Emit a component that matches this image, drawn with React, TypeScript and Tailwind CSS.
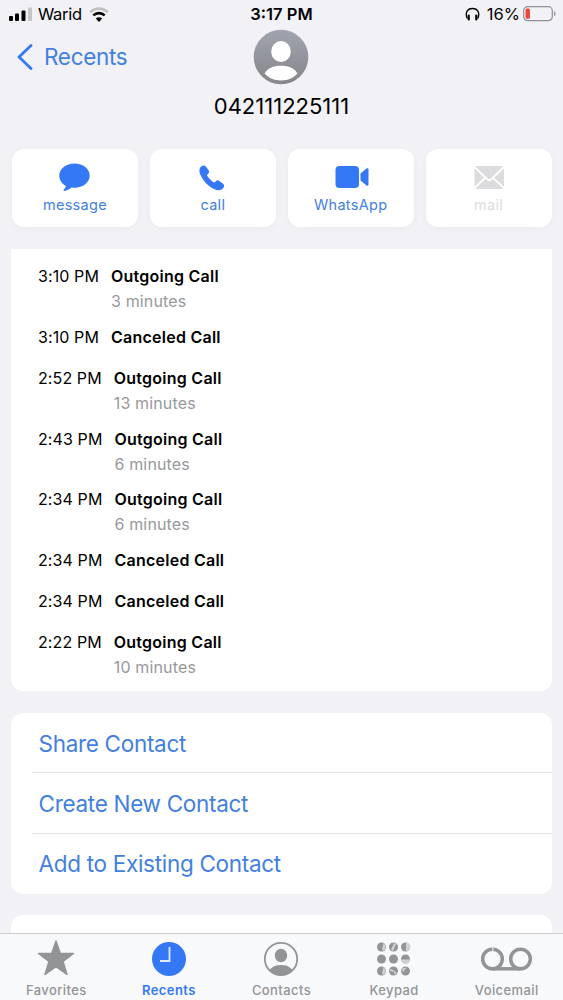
import type { ReactNode } from 'react'

interface CallEntry {
  time: string
  title: string
  duration?: string
}

const calls: CallEntry[] = [
  { time: '3:10 PM', title: 'Outgoing Call', duration: '3 minutes' },
  { time: '3:10 PM', title: 'Canceled Call' },
  { time: '2:52 PM', title: 'Outgoing Call', duration: '13 minutes' },
  { time: '2:43 PM', title: 'Outgoing Call', duration: '6 minutes' },
  { time: '2:34 PM', title: 'Outgoing Call', duration: '6 minutes' },
  { time: '2:34 PM', title: 'Canceled Call' },
  { time: '2:34 PM', title: 'Canceled Call' },
  { time: '2:22 PM', title: 'Outgoing Call', duration: '10 minutes' },
]

const links = ['Share Contact', 'Create New Contact', 'Add to Existing Contact']

function StatusBar() {
  return (
    <div className="grid h-7 grid-cols-3 items-center pb-px text-[16.5px] leading-7">
      <div className="flex items-center pl-[9px]">
        <svg width="24" height="14" viewBox="0 0 24 14">
          <rect x="0" y="9" width="4" height="5" rx="1" />
          <rect x="6" y="6.500" width="4" height="7.500" rx="1" />
          <rect x="12.500" y="3.500" width="4" height="10.500" rx="1" />
          <rect x="19" y=".5" width="4" height="13.500" rx="1" fill="#c5c5c9" />
        </svg>
        <span className="ml-[5px] tracking-[-0.3px]">Warid</span>
        <svg className="ml-[7px]" width="20" height="15" viewBox="0 0 20 15" fill="none">
          <path d="M1.300 5.200C6.300.4 13.700.4 18.700 5.200" stroke="#c0c0c4" strokeWidth="2.600" />
          <path d="M4.300 8.400c3.300-3 8.100-3 11.400 0" stroke="#000" strokeWidth="2.600" />
          <path d="M10 15 6.800 11.600c1.800-1.700 4.600-1.700 6.400 0Z" fill="#000" />
        </svg>
      </div>
      <div className="text-center font-semibold">3:17 PM</div>
      <div className="flex items-center justify-end pr-1.5">
        <svg className="mr-[7px]" width="15" height="14" viewBox="0 0 15 14" fill="none">
          <path d="M2.300 11.500C-.2 6.500 2 1.500 7.500 1.500s7.700 5 5.200 10" stroke="#000" strokeWidth="1.300" />
          <path d="M3.700 8.500v4M11.300 8.500v4" stroke="#000" strokeWidth="2.200" strokeLinecap="round" />
        </svg>
        <span>16%</span>
        <svg className="ml-[3px]" width="34" height="16" viewBox="0 0 34 16">
          <rect x=".7" y=".7" width="28.600" height="14" rx="4" fill="none" stroke="#919196" strokeWidth="1.200" />
          <rect x="2.500" y="2.600" width="4.500" height="10.200" rx="1.500" fill="#eb4b3d" />
          <path d="M31 5.200c2 .8 2 4.200 0 5Z" fill="#919196" />
        </svg>
      </div>
    </div>
  )
}

function Avatar() {
  return (
    <svg width="56" height="56" viewBox="0 0 56 56">
      <defs>
        <linearGradient id="avatar" x1="0" y1="0" x2="0" y2="1">
          <stop offset="0" stopColor="#a1a4b0" />
          <stop offset="1" stopColor="#858689" />
        </linearGradient>
      </defs>
      <circle cx="28" cy="28" r="27.300" fill="url(#avatar)" />
      <ellipse cx="28" cy="22.500" rx="9.800" ry="10.500" fill="#fff" />
      <path d="M11.500 44.500c3-5.200 8.700-7.700 16.500-7.700s13.500 2.500 16.500 7.700c-4.200 4.600-9.500 6.900-16.500 6.900s-12.300-2.300-16.500-6.900Z" fill="#fff" />
    </svg>
  )
}

function ActionButton({ label, disabled, children }: { label: string; disabled?: boolean; children: ReactNode }) {
  return (
    <button
      className={`flex h-[78px] flex-col items-center rounded-xl bg-white pt-3 shadow-[0_2px_10px_rgba(0,0,0,0.03)] ${
        disabled ? 'text-[#dcdcde]' : 'text-[#3478f6]'
      }`}
    >
      <svg width="36" height="32" viewBox="0 0 36 32" fill="currentColor">
        {children}
      </svg>
      <span className={`mt-px text-[14.5px] leading-[22px] tracking-[0.3px] ${disabled ? '' : 'text-[#437fdf]'}`}>{label}</span>
    </button>
  )
}

function Actions() {
  return (
    <div className="mt-[29px] grid grid-cols-4 gap-3 pr-[11.500px] pl-3">
      <ActionButton label="message">
        <path d="M17.500 2.500c8.500 0 15.200 5.300 15.200 12.100S26.100 26.800 17.500 26.800c-1 0-2 0-2.900-.2-2.200 1.900-5 3.100-7.300 3.300-.8.100-1.100-.7-.5-1.300 1.100-1.100 1.800-2.200 2-3.700C4.800 22.800 2.300 19 2.300 14.600 2.300 7.800 9 2.500 17.500 2.500Z" />
      </ActionButton>
      <ActionButton label="call">
        <path d="M6.500 5.200c1.700-1.300 3.400-1 4.500.5l2.600 3.600c.9 1.300.7 2.300-.3 3.300l-.9.900c-.5.500-.5 1-.1 1.600 1.700 2.500 3.600 4.400 6.100 6.100.6.400 1.100.4 1.600-.1l.9-.9c1-1 2-1.200 3.300-.3l3.600 2.600c1.500 1.100 1.800 2.800.5 4.500-2 2.600-5.300 2.800-8.700 1.300C13.500 25.500 8.400 20.100 5.500 14 4 10.500 3.900 7.200 6.500 5.200Z" />
      </ActionButton>
      <ActionButton label="WhatsApp">
        <rect x="2.500" y="5" width="23.500" height="22" rx="4" />
        <path d="m27.500 12.500 6-5c.8-.7 2-.2 2 .9v15.200c0 1.100-1.200 1.600-2 .9l-6-5Z" />
      </ActionButton>
      <ActionButton label="mail" disabled>
        <rect x="3.500" y="5" width="29.500" height="23" rx="2" />
        <path d="m3.500 6 12.500 12.200q2.200 2 4.400 0L33 6M3.500 27l11-10.500M33 27 21.500 16.500" fill="none" stroke="#fff" strokeWidth="1.800" />
      </ActionButton>
    </div>
  )
}

function CallHistory() {
  return (
    <div className="mx-[11px] mt-[22px] h-[442px] rounded-b-xl bg-white pt-[15px] pl-[27px]">
      {calls.map((call, i) => (
        <div key={i} className={`flex gap-3 text-[16px] ${call.duration ? 'h-[60.700px]' : 'h-[41.200px]'}`}>
          <span className="leading-6 tracking-[0.100px]">{call.time}</span>
          <div>
            <p className="leading-6 font-semibold tracking-[0.250px]">{call.title}</p>
            {call.duration && <p className="leading-[26px] tracking-[0.150px] text-[#98989b]">{call.duration}</p>}
          </div>
        </div>
      ))}
    </div>
  )
}

function ContactLinks() {
  return (
    <div className="mx-[11px] mt-[22px] h-[181px] rounded-xl bg-white pl-[21px] text-[22.5px] tracking-[-0.3px] text-[#437fdf]">
      {links.map((link, i) => (
        <div
          key={link}
          className={`flex items-center pt-[2px] pl-[6.500px] ${i ? 'h-[60.500px] border-t border-[#e4e4e7]' : 'h-[59px]'}`}
        >
          {link}
        </div>
      ))}
    </div>
  )
}

function Tab({ label, active, children }: { label: string; active?: boolean; children: ReactNode }) {
  return (
    <div className={`flex flex-col items-center ${active ? 'text-[#3478f6]' : 'text-[#929496]'}`}>
      <svg className="mt-[5px]" width="56" height="40" viewBox="0 0 56 40" fill="currentColor">
        {children}
      </svg>
      <span className={`mt-px text-[13px] leading-5 tracking-[0.4px] ${active ? 'font-semibold' : 'font-medium'}`}>{label}</span>
    </div>
  )
}

function TabBar() {
  return (
    <div className="grid h-[67px] grid-cols-5 border-t border-[#cbcccf] bg-[#f8f9fb]">
      <Tab label="Favorites">
        <path d="m28 3 4.300 12.500H45.500L35 23.400l4 13L28 28.700l-11 7.700 4-13-10.500-7.900h13.200Z" transform="translate(0 -1)" stroke="currentColor" strokeWidth="1.500" strokeLinejoin="round" />
      </Tab>
      <Tab label="Recents" active>
        <circle cx="28" cy="20" r="17" />
        <path d="M28.500 8v14h-9.500" fill="none" stroke="#dfeaff" strokeWidth="1.800" />
      </Tab>
      <Tab label="Contacts">
        <defs>
          <clipPath id="contact-ring">
            <circle cx="28" cy="20" r="16" />
          </clipPath>
        </defs>
        <circle cx="28" cy="20" r="16.200" fill="none" stroke="currentColor" strokeWidth="1.800" />
        <ellipse cx="28" cy="16.500" rx="6.200" ry="6.800" />
        <path d="M15 37c0-7.500 6-11 13-11s13 3.500 13 11Z" clipPath="url(#contact-ring)" />
      </Tab>
      <Tab label="Keypad">
        {[8, 20, 32].map((y) => [15.5, 27.5, 39.5].map((x) => <circle key={`${x}-${y}`} cx={x} cy={y} r="4.500" />))}
        {/* light reflections on the keys */}
        <g fill="#cfd1d3">
          <path d="m17.500 4 2 2.200v3.600l-2.500 2.200-1-2ZM40 3.500a4.500 4.500 0 0 1 0 9ZM17.500 28l2 2.200v3.600l-2.500 2.200-1-2ZM35 20.500h9a4.500 4.500 0 0 1-9 0Z" />
          <path d="m28 4 2 1-3 7-2-1ZM24 30l3 1 4 3-2 2-1-3-4-1ZM36 29.500l5-1-2 2-2 3Z" />
        </g>
      </Tab>
      <Tab label="Voicemail">
        <g fill="none" stroke="currentColor" strokeWidth="3.500">
          <circle cx="13.500" cy="20" r="9.800" />
          <circle cx="41.500" cy="20" r="9.800" />
          <path d="M13.500 29.800h28" />
        </g>
        <path d="M13 8.500h1.500v3.500H13Z" fill="#d3d5d7" />
      </Tab>
    </div>
  )
}

export default function App() {
  return (
    <div className="flex h-[1000px] w-[563px] flex-col overflow-hidden bg-[#f1f1f6] font-['Inter',sans-serif] text-black">
      <StatusBar />
      <div className="grid h-[92px] grid-cols-3">
        <div className="flex h-[58px] items-center gap-[11px] pl-[17px] text-[22.5px] tracking-[-0.3px] text-[#437fdf]">
          <svg width="16" height="26" viewBox="0 0 16 26" fill="none" stroke="#3478f6" strokeWidth="2.800" strokeLinecap="round" strokeLinejoin="round">
            <path d="M14 1.500 2 13l12 11.500" />
          </svg>
          Recents
        </div>
        <div className="flex flex-col items-center pt-px">
          <Avatar />
          <h1 className="mt-1.5 text-[22px] leading-[30px]">042111225111</h1>
        </div>
      </div>
      <Actions />
      <CallHistory />
      <ContactLinks />
      <div className="mx-[11px] mt-[21px] min-h-0 flex-1 rounded-t-xl bg-white" />
      <TabBar />
    </div>
  )
}
